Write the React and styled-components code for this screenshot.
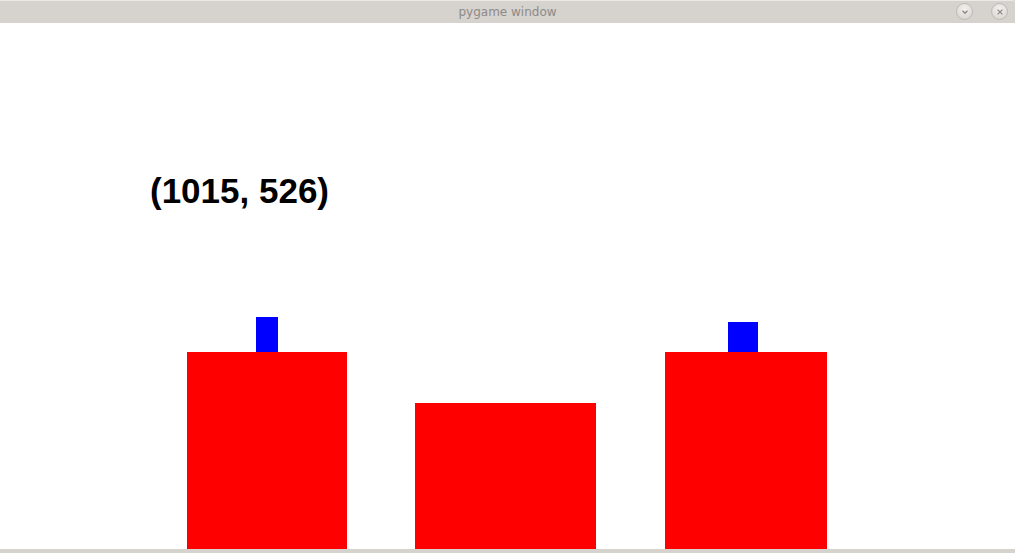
import React from "react"
import styled, { createGlobalStyle } from "styled-components"

const GlobalStyle = createGlobalStyle`
  html, body {
    margin: 0;
    padding: 0;
    background: #ffffff;
  }
`

const Window = styled.div`
  width: 1015px;
  height: 553px;
  display: flex;
  flex-direction: column;
  background: #d6d2ce;
  overflow: hidden;
`

const TitleBar = styled.div`
  position: relative;
  height: 23px;
  flex: none;
  display: flex;
  align-items: center;
  justify-content: center;
  background: #d6d2ce;
  border-top: 1px solid #ece9e6;
  box-sizing: border-box;
  border-top-right-radius: 3px;
`

const Title = styled.span`
  font-family: "DejaVu Sans", sans-serif;
  font-size: 12px;
  color: #8d8b89;
  margin-top: -1px;
`

const Controls = styled.div`
  position: absolute;
  right: 7px;
  top: 2px;
  display: flex;
  gap: 18px;
`

const RoundButton = styled.div`
  width: 17px;
  height: 17px;
  border-radius: 50%;
  box-sizing: border-box;
  border: 1px solid #bdb9b5;
  background: radial-gradient(circle at 50% 35%, #f3f1ef 0%, #dedad6 70%, #cfcbc7 100%);
  display: flex;
  align-items: center;
  justify-content: center;
`

const Canvas = styled.div`
  position: relative;
  height: 526px;
  flex: none;
  background: #ffffff;
`

const Label = styled.div`
  position: absolute;
  left: 150px;
  top: 150px;
  font-family: "Liberation Sans", Arial, sans-serif;
  font-weight: bold;
  font-size: 35px;
  line-height: 35px;
  color: #000000;
`

const Ground = styled.div`
  position: absolute;
  left: 0;
  right: 0;
  bottom: 0;
  display: flex;
  align-items: flex-end;
`

const Tower = styled.div`
  display: flex;
  flex-direction: column;
  margin-left: ${p => p.$gap}px;
`

const Block = styled.div`
  width: ${p => p.$w}px;
  height: ${p => p.$h}px;
  background: #ff0000;
`

const Marker = styled.div`
  width: ${p => p.$w}px;
  height: ${p => p.$h}px;
  margin-left: ${p => p.$x}px;
  background: #0000ff;
`

const BottomEdge = styled.div`
  height: 4px;
  flex: none;
  background: #d6d2ce;
`

const towers = [
  { gap: 187, w: 160, h: 197, marker: { x: 69, w: 22, h: 35 } },
  { gap: 68, w: 181, h: 146 },
  { gap: 69, w: 162, h: 197, marker: { x: 63, w: 30, h: 30 } },
]

export default function App() {
  return (
    <>
      <GlobalStyle />
      <Window>
        <TitleBar>
          <Title>pygame window</Title>
          <Controls>
            <RoundButton>
              <svg width="10" height="10" viewBox="0 0 10 10">
                <path d="M2.5 3.8 L5 6.3 L7.5 3.8" fill="none" stroke="#8a8784" strokeWidth="1.3" />
              </svg>
            </RoundButton>
            <RoundButton>
              <svg width="10" height="10" viewBox="0 0 10 10">
                <path d="M2.6 2.6 L7.4 7.4 M7.4 2.6 L2.6 7.4" fill="none" stroke="#8a8784" strokeWidth="1.3" />
              </svg>
            </RoundButton>
          </Controls>
        </TitleBar>
        <Canvas>
          <Label>(1015, 526)</Label>
          <Ground>
            {towers.map((t, i) => (
              <Tower key={i} $gap={t.gap}>
                {t.marker && <Marker $x={t.marker.x} $w={t.marker.w} $h={t.marker.h} />}
                <Block $w={t.w} $h={t.h} />
              </Tower>
            ))}
          </Ground>
        </Canvas>
        <BottomEdge />
      </Window>
    </>
  )
}
